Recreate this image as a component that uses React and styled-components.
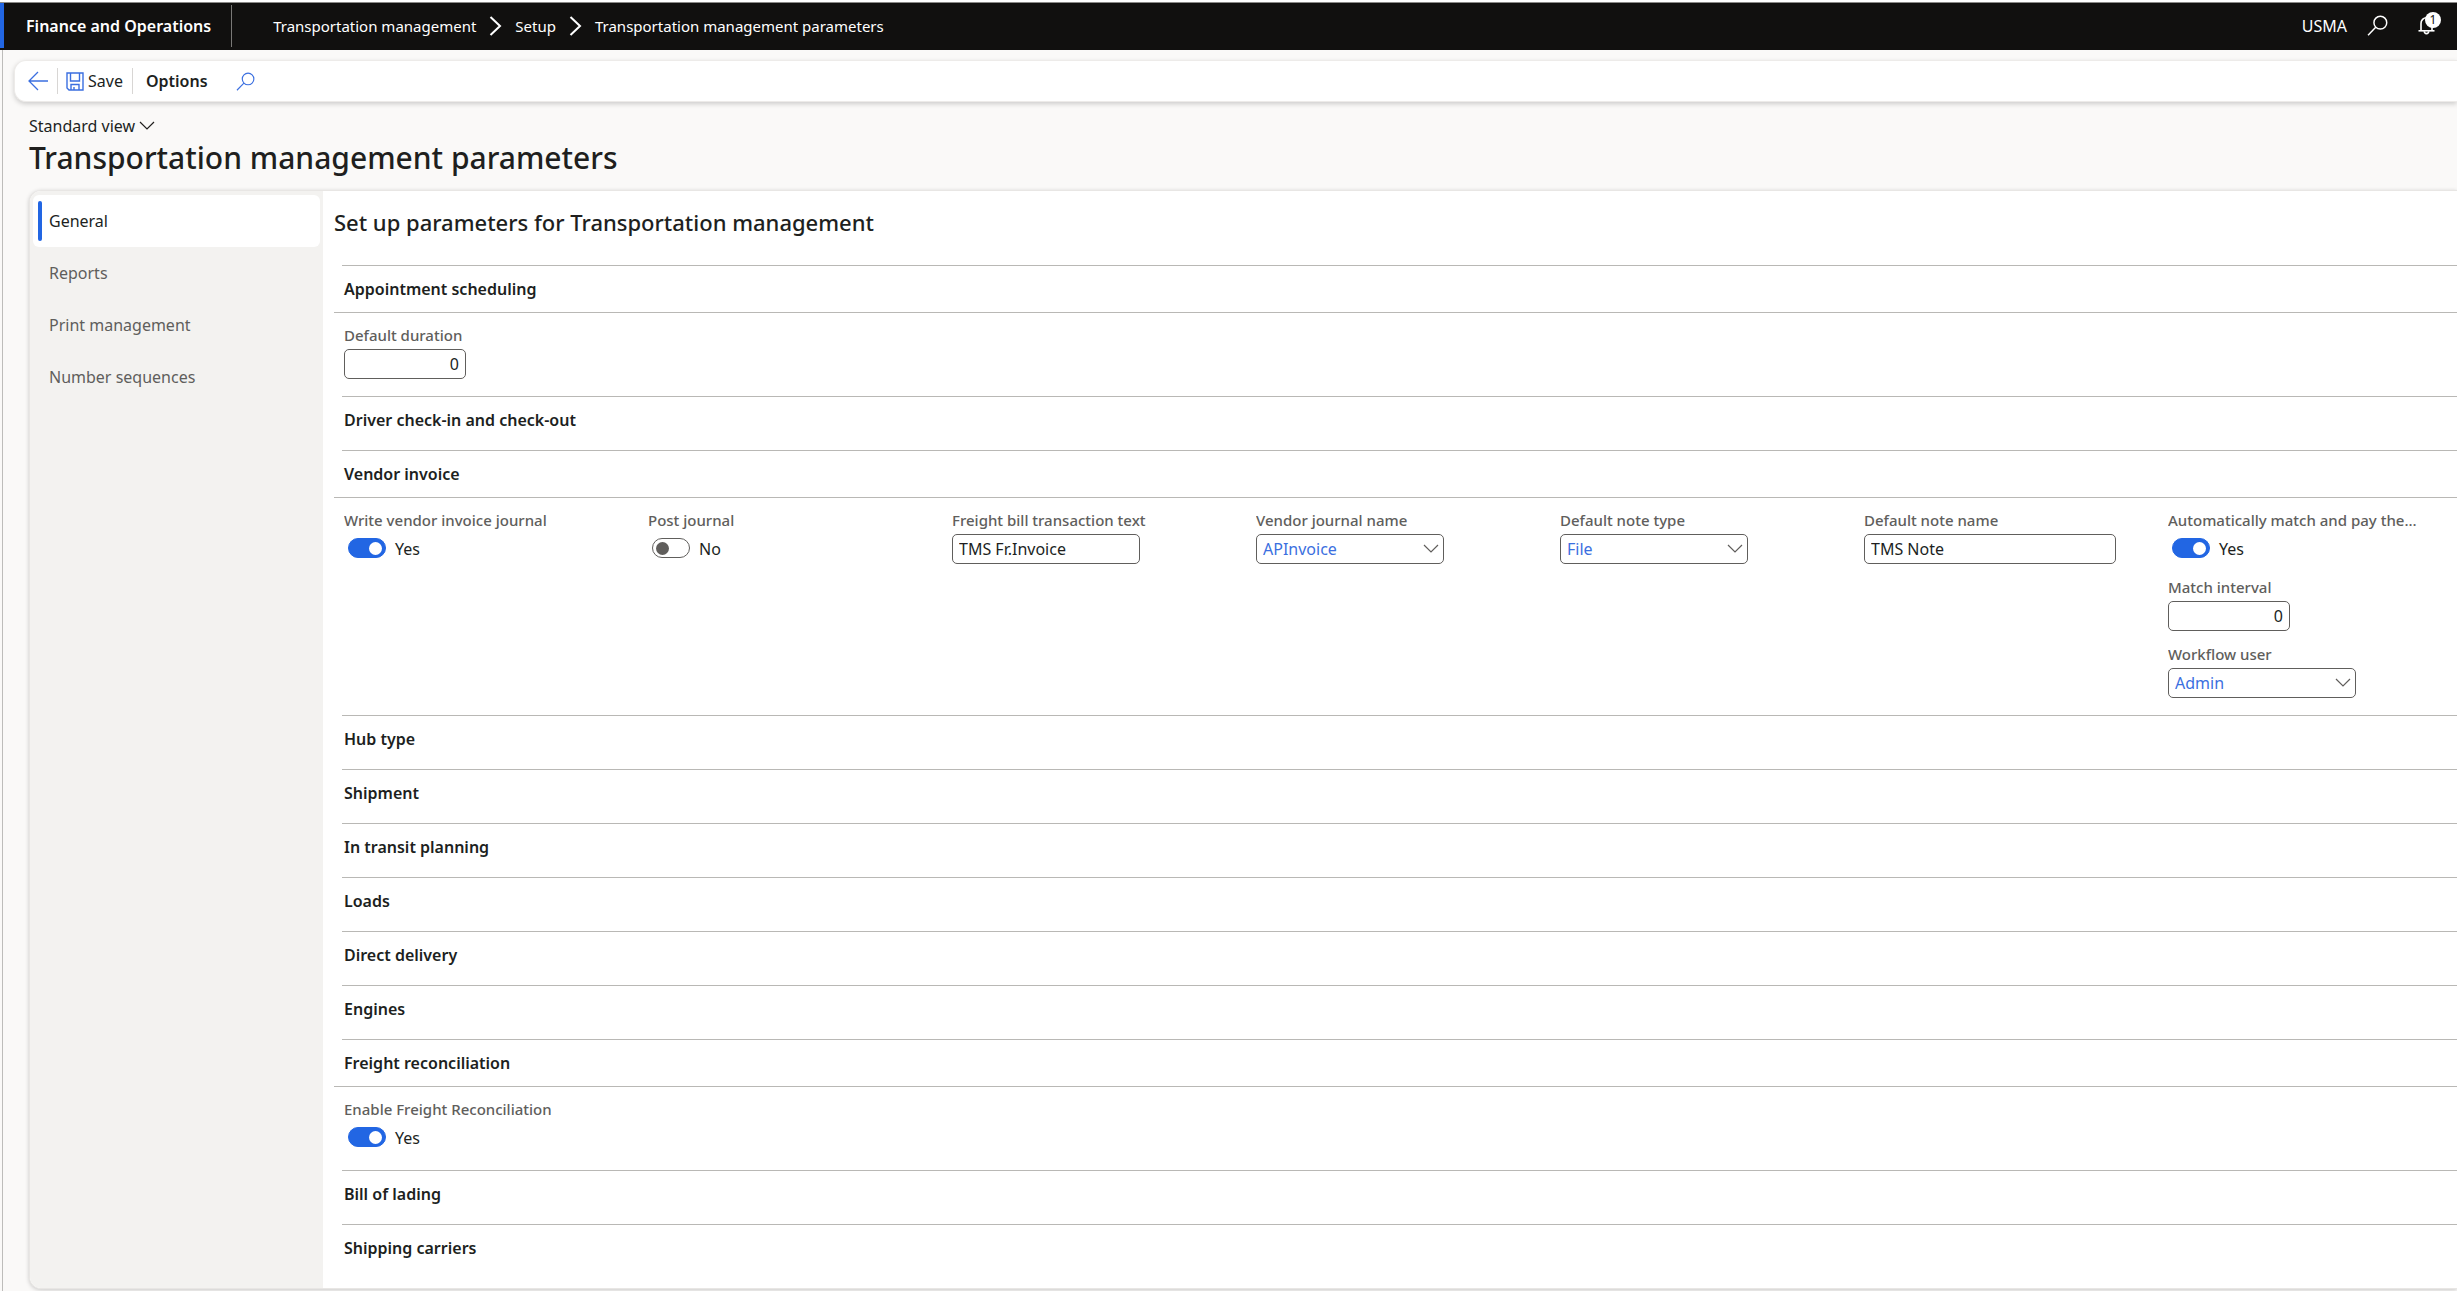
import React, { useState } from "react";
import styled, { createGlobalStyle, css } from "styled-components";

const color = {
  text: "#201f1e",
  muted: "#605e5c",
  accent: "#2266e3",
  value: "#3b6fe0",
  line: "#b9b8b5",
  canvas: "#faf9f8",
  side: "#f3f2f0",
  bar: "#11100f",
};

const Global = createGlobalStyle`
  *, *::before, *::after { box-sizing: border-box; }
  html, body, #root { height: 100%; }
  body {
    margin: 0;
    overflow: hidden;
    background: ${color.canvas};
    color: ${color.text};
    font: 400 16px/22px "Noto Sans", "Open Sans", sans-serif;
  }
  button, input, select { font: inherit; color: inherit; }
`;

const Page = styled.div`
  display: flex;
  flex-direction: column;
  min-height: 100vh;
  border-top: 2px solid #fff;
`;

const TopBar = styled.header`
  display: flex;
  align-items: center;
  height: 48px;
  padding: 0 16px 2px 0;
  border-top: 1px solid #8a8987;
  background: ${color.bar};
  color: #fff;
`;

const Brand = styled.a`
  display: flex;
  align-items: center;
  align-self: stretch;
  padding: 0 20px 0 22px;
  border-left: 4px solid ${color.accent};
  color: #fff;
  font-weight: 600;
  text-decoration: none;
`;

const BarDivider = styled.span`
  width: 1px;
  height: 42px;
  background: #7a7977;
`;

const Crumbs = styled.nav`
  display: flex;
  align-items: center;
  gap: 13px;
  margin-left: 41px;
  font-size: 15px;
`;

const Crumb = styled.a`
  color: #fff;
  text-decoration: none;
`;

const BarTools = styled.div`
  display: flex;
  align-items: center;
  gap: 20px;
  margin-left: auto;
`;

const PlainButton = styled.button`
  display: inline-flex;
  align-items: center;
  gap: 4px;
  padding: 0;
  border: 0;
  background: none;
  font-weight: ${(p) => (p.$strong ? 600 : 400)};
`;

const BellButton = styled(PlainButton)`
  position: relative;
  width: 33px;
  height: 24px;
  padding-left: 10px;
`;

const Badge = styled.span`
  position: absolute;
  top: -2px;
  right: 0;
  width: 16px;
  height: 16px;
  border-radius: 50%;
  background: #fff;
  color: ${color.bar};
  font-size: 12px;
  line-height: 16px;
  text-align: center;
`;

const Body = styled.div`
  display: flex;
  flex: 1;
  flex-direction: column;
  margin-left: 2px;
  border-left: 1px solid #bdbcba;
`;

const ActionBar = styled.div`
  display: flex;
  align-items: center;
  height: 42px;
  margin: 10px 0 0 11px;
  padding-left: 13px;
  border: 1px solid #edebe9;
  border-right: 0;
  border-radius: 12px 0 0 12px;
  background: #fff;
  box-shadow: 0 2px 5px rgba(0, 0, 0, 0.18);
`;

const ActionDivider = styled.span`
  width: 1px;
  height: 26px;
  margin: 0 ${(p) => p.$after}px 0 9px;
  background: #d8d6d4;
`;

const SearchAction = styled(PlainButton)`
  margin-left: 28px;
`;

const Intro = styled.div`
  padding: 13px 0 12px 26px;
`;

const Title = styled.h1`
  margin: 1px 0 0;
  font-size: 30px;
  font-weight: 500;
  line-height: 40px;
`;

const Panel = styled.main`
  display: flex;
  flex: 1;
  margin: 0 0 2px 26px;
  border: 1px solid #e8e6e4;
  border-right: 0;
  border-radius: 12px 0 0 12px;
  background: #fff;
  box-shadow: 0 1px 4px rgba(0, 0, 0, 0.2);
  overflow: hidden;
`;

const SideTabs = styled.nav`
  display: flex;
  flex: none;
  flex-direction: column;
  width: 293px;
  padding: 4px 3px;
  background: ${color.side};
`;

const SideTab = styled.button`
  display: flex;
  align-items: center;
  gap: 7px;
  height: 52px;
  padding: 0 5px;
  border: 0;
  border-radius: 6px;
  background: ${(p) => (p.$active ? "#fff" : "none")};
  color: ${(p) => (p.$active ? color.text : color.muted)};
  text-align: left;

  &::before {
    content: "";
    width: 4px;
    height: 40px;
    border-radius: 2px;
    background: ${(p) => (p.$active ? color.accent : "transparent")};
  }
`;

const Content = styled.div`
  flex: 1;
  min-width: 0;
  padding-left: 11px;
`;

const Heading = styled.h2`
  margin: 0;
  padding: 16px 0 28px;
  font-size: 22px;
  font-weight: 500;
  line-height: 30px;
`;

const SectionHead = styled.h3`
  margin: 0;
  font-size: 16px;
  font-weight: 600;

  &::before {
    content: "";
    display: block;
    height: 1px;
    margin-left: 8px;
    background: ${color.line};
  }
`;

const SectionToggle = styled.button`
  display: block;
  width: 100%;
  padding: 12px 10px;
  border: 0;
  background: none;
  text-align: left;
  ${(p) =>
    p.$open
      ? css`
          border-bottom: 1px solid ${color.line};
        `
      : css`
          padding: 12px 10px 19px;
        `}
`;

const Fields = styled.div`
  display: grid;
  grid-template-columns: repeat(auto-fill, 252px);
  column-gap: 52px;
  padding: 11px 0 17px 10px;
`;

const FieldStack = styled.div`
  display: flex;
  flex-direction: column;
  gap: 12px;
`;

const Field = styled.div`
  display: flex;
  flex-direction: column;
  gap: 3px;
`;

const Label = styled.label`
  overflow: hidden;
  color: ${color.muted};
  font-size: 15px;
  font-weight: 500;
  text-overflow: ellipsis;
  white-space: nowrap;
`;

const box = css`
  width: 100%;
  height: 30px;
  padding: 0 6px;
  border: 1px solid ${color.muted};
  border-radius: 5px;
  background: #fff;
`;

const widths = { short: "122px", medium: "188px", full: "100%" };

const TextBox = styled.input`
  ${box}
  width: ${(p) => widths[p.$size]};
  text-align: ${(p) => (p.$size === "short" ? "right" : "left")};
`;

const SelectWrap = styled.div`
  display: grid;
  align-items: center;
  width: ${widths.medium};

  > * {
    grid-area: 1 / 1;
  }
  > svg {
    justify-self: end;
    margin-right: 5px;
    color: ${color.muted};
    pointer-events: none;
  }
`;

const SelectBox = styled.select`
  ${box}
  appearance: none;
  color: ${color.value};
`;

const SwitchRow = styled.div`
  display: flex;
  align-items: center;
  gap: 9px;
  height: 30px;
  padding-left: 4px;
`;

const Switch = styled.input`
  display: flex;
  align-items: center;
  appearance: none;
  width: 38px;
  height: 20px;
  margin: 0 0 2px;
  padding: 0 3px;
  border: 1px solid ${color.muted};
  border-radius: 10px;
  background: #fff;

  &::before {
    content: "";
    width: 13px;
    height: 13px;
    border-radius: 50%;
    background: ${color.muted};
  }
  &:checked {
    justify-content: flex-end;
    border-color: ${color.accent};
    background: ${color.accent};
  }
  &:checked::before {
    background: #fff;
  }
`;

const Icon = ({ w, h = w, box, stroke = 1, children }) => (
  <svg width={w} height={h} viewBox={box || `0 0 ${w} ${h}`} fill="none" stroke="currentColor" strokeWidth={stroke} aria-hidden="true">
    {children}
  </svg>
);

const Tint = styled.span`
  display: inline-flex;
  color: ${(p) => p.$color};
`;

const CrumbArrow = () => (
  <Icon w={13} h={20} stroke={2}>
    <path d="M1.5 1 L11 10 L1.5 19" />
  </Icon>
);

const Chevron = () => (
  <Icon w={16} h={10} stroke={1.2}>
    <path d="M1 1 L8 8 L15 1" />
  </Icon>
);

const Magnifier = ({ size, stroke }) => (
  <Icon w={size} box="0 0 20 20" stroke={stroke}>
    <circle cx="12.7" cy="7.3" r="6.1" />
    <path d="M8.3 11.7 L1 19.2" />
  </Icon>
);

const BackArrow = () => (
  <Icon w={20} stroke={1.3}>
    <path d="M20 10 H1 M10 1 L1 10 L10 19" />
  </Icon>
);

const Disk = () => (
  <Icon w={18} h={19} stroke={1.4}>
    <path d="M1 1 H17 V18 H3 L1 16 Z" />
    <path d="M4.5 1 V9 H13.5 V1" />
    <path d="M5 18 V12.5 H13 V18 M8 18 V15" />
  </Icon>
);

const Bell = () => (
  <Icon w={17} h={19} stroke={1.6}>
    <path d="M3 14.5 V7.5 C3 4.2 5.4 1.8 8.5 1.8 C11.6 1.8 14 4.2 14 7.5 V14.5" />
    <path d="M0.5 14.8 H16.5" />
    <path d="M6.3 15.2 C6.5 18.4 10.5 18.4 10.7 15.2" />
  </Icon>
);

const tabs = ["General", "Reports", "Print management", "Number sequences"];

const sections = [
  { title: "Appointment scheduling", columns: [[{ type: "text", label: "Default duration", value: "0", size: "short" }]] },
  { title: "Driver check-in and check-out" },
  {
    title: "Vendor invoice",
    columns: [
      [{ type: "switch", label: "Write vendor invoice journal", value: true }],
      [{ type: "switch", label: "Post journal", value: false }],
      [{ type: "text", label: "Freight bill transaction text", value: "TMS Fr.Invoice", size: "medium" }],
      [{ type: "select", label: "Vendor journal name", value: "APInvoice" }],
      [{ type: "select", label: "Default note type", value: "File" }],
      [{ type: "text", label: "Default note name", value: "TMS Note", size: "full" }],
      [
        { type: "switch", label: "Automatically match and pay the...", value: true },
        { type: "text", label: "Match interval", value: "0", size: "short" },
        { type: "select", label: "Workflow user", value: "Admin" },
      ],
    ],
  },
  { title: "Hub type" },
  { title: "Shipment" },
  { title: "In transit planning" },
  { title: "Loads" },
  { title: "Direct delivery" },
  { title: "Engines" },
  { title: "Freight reconciliation", columns: [[{ type: "switch", label: "Enable Freight Reconciliation", value: true }]] },
  { title: "Bill of lading" },
  { title: "Shipping carriers" },
];

function SwitchField({ id, initial }) {
  const [on, setOn] = useState(initial);
  return (
    <SwitchRow>
      <Switch id={id} type="checkbox" role="switch" checked={on} onChange={() => setOn(!on)} />
      <span>{on ? "Yes" : "No"}</span>
    </SwitchRow>
  );
}

function FormField({ type, label, value, size }) {
  const id = label.toLowerCase().replace(/[^a-z]+/g, "-");
  return (
    <Field>
      <Label htmlFor={id}>{label}</Label>
      {type === "switch" && <SwitchField id={id} initial={value} />}
      {type === "text" && <TextBox id={id} type="text" defaultValue={value} $size={size} />}
      {type === "select" && (
        <SelectWrap>
          <SelectBox id={id} defaultValue={value}>
            <option>{value}</option>
          </SelectBox>
          <Chevron />
        </SelectWrap>
      )}
    </Field>
  );
}

function Section({ title, columns }) {
  const [open, setOpen] = useState(Boolean(columns));
  return (
    <section>
      <SectionHead>
        <SectionToggle type="button" $open={open} aria-expanded={open} onClick={() => setOpen(!open)}>
          {title}
        </SectionToggle>
      </SectionHead>
      {open && columns && (
        <Fields>
          {columns.map((fields) => (
            <FieldStack key={fields[0].label}>
              {fields.map((f) => (
                <FormField key={f.label} {...f} />
              ))}
            </FieldStack>
          ))}
        </Fields>
      )}
    </section>
  );
}

export default function App() {
  const [tab, setTab] = useState("General");
  return (
    <Page>
      <Global />
      <TopBar>
        <Brand href="#home">Finance and Operations</Brand>
        <BarDivider />
        <Crumbs aria-label="Breadcrumb">
          <Crumb href="#module">Transportation management</Crumb>
          <CrumbArrow />
          <Crumb href="#setup">Setup</Crumb>
          <CrumbArrow />
          <Crumb href="#parameters">Transportation management parameters</Crumb>
        </Crumbs>
        <BarTools>
          <PlainButton type="button">USMA</PlainButton>
          <PlainButton type="button" aria-label="Search">
            <Magnifier size={21} stroke={1.4} />
          </PlainButton>
          <BellButton type="button" aria-label="Notifications">
            <Bell />
            <Badge>1</Badge>
          </BellButton>
        </BarTools>
      </TopBar>
      <Body>
        <ActionBar>
          <PlainButton type="button" aria-label="Back">
            <Tint $color={color.value}>
              <BackArrow />
            </Tint>
          </PlainButton>
          <ActionDivider $after={8} />
          <PlainButton type="button">
            <Tint $color={color.value}>
              <Disk />
            </Tint>
            Save
          </PlainButton>
          <ActionDivider $after={13} />
          <PlainButton type="button" $strong>
            Options
          </PlainButton>
          <SearchAction type="button" aria-label="Search actions">
            <Tint $color={color.value}>
              <Magnifier size={19} stroke={1.2} />
            </Tint>
          </SearchAction>
        </ActionBar>
        <Intro>
          <PlainButton type="button">
            Standard view
            <Chevron />
          </PlainButton>
          <Title>Transportation management parameters</Title>
        </Intro>
        <Panel>
          <SideTabs>
            {tabs.map((name) => (
              <SideTab key={name} type="button" $active={name === tab} onClick={() => setTab(name)}>
                {name}
              </SideTab>
            ))}
          </SideTabs>
          <Content>
            <Heading>Set up parameters for Transportation management</Heading>
            {sections.map((s) => (
              <Section key={s.title} {...s} />
            ))}
          </Content>
        </Panel>
      </Body>
    </Page>
  );
}
